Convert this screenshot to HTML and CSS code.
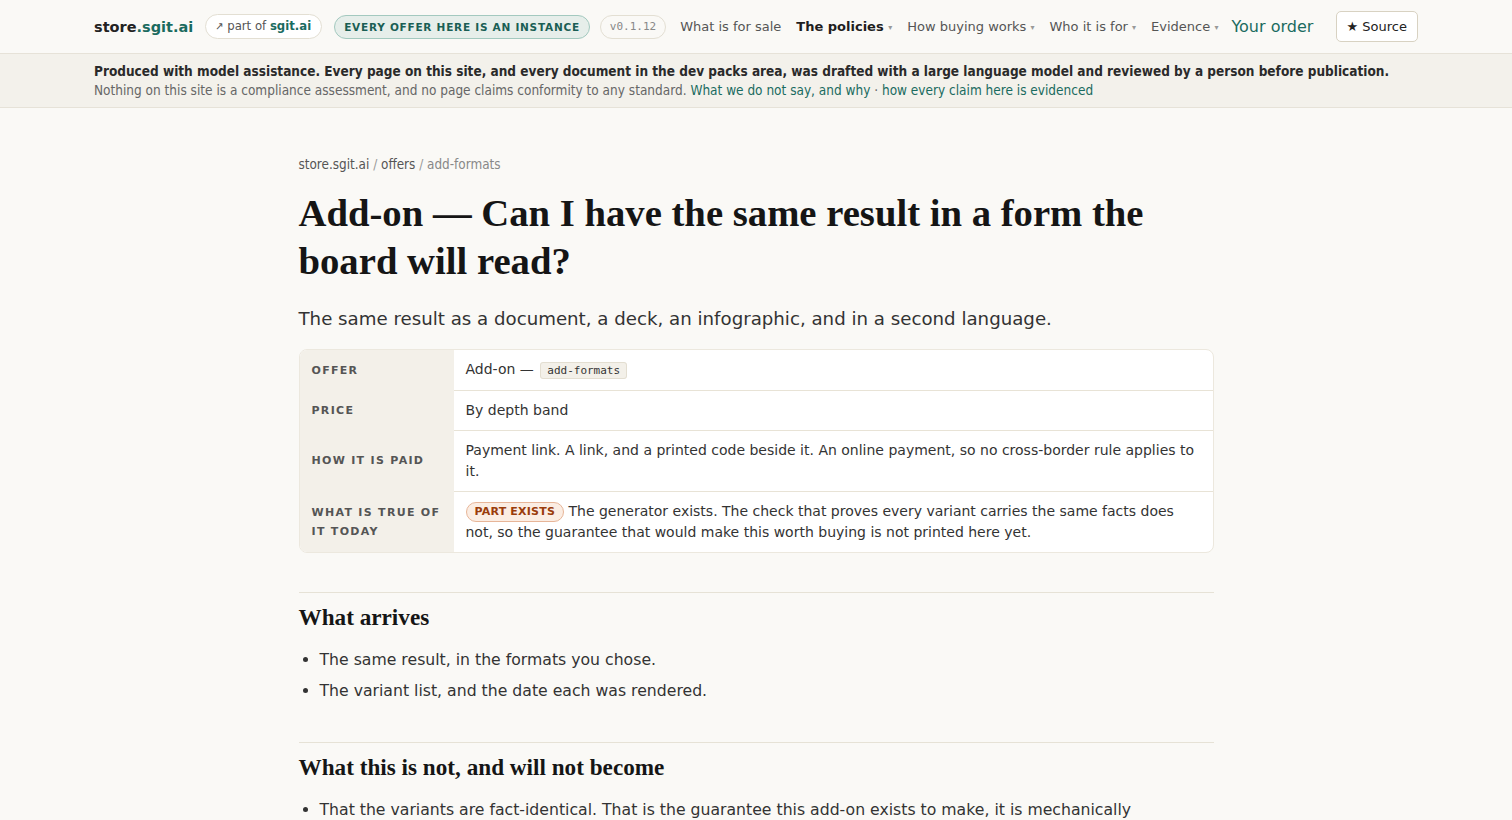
FILE: index.html
```html
<!DOCTYPE html>
<html lang="en">
<head>
<meta charset="utf-8">
<title>Add-on — Can I have the same result in a form the board will read?</title>
<link rel="stylesheet" href="styles.css">
</head>
<body>
<header class="site-header">
  <div class="header-inner">
    <a class="logo" href="#">store<span class="logo-accent">.sgit.ai</span></a>
    <a class="part-of" href="#"><span class="arrow">↗</span> part of <b>sgit.ai</b></a>
    <span class="instance-badge">EVERY OFFER HERE IS AN INSTANCE</span>
    <span class="version">v0.1.12</span>
    <nav class="nav">
      <a class="nav-item" href="#">What is for sale</a>
      <a class="nav-item active" href="#">The policies <span class="caret">▾</span></a>
      <a class="nav-item" href="#">How buying works <span class="caret">▾</span></a>
      <a class="nav-item" href="#">Who it is for <span class="caret">▾</span></a>
      <a class="nav-item" href="#">Evidence <span class="caret">▾</span></a>
      <a class="nav-order" href="#">Your order</a>
    </nav>
    <a class="source-btn" href="#">★ Source</a>
  </div>
</header>
<div class="notice">
  <div class="notice-inner">
    <p class="notice-strong">Produced with model assistance. Every page on this site, and every document in the dev packs area, was drafted with a large language model and reviewed by a person before publication.</p>
    <p class="notice-sub">Nothing on this site is a compliance assessment, and no page claims conformity to any standard. <a href="#">What we do not say, and why</a> · <a href="#">how every claim here is evidenced</a></p>
  </div>
</div>
<main class="page">
  <div class="crumbs"><a href="#">store.sgit.ai</a> <span class="sep">/</span> <a href="#">offers</a> <span class="sep">/</span> <span class="current">add-formats</span></div>
  <h1 class="title">Add-on — Can I have the same result in a form the board will read?</h1>
  <p class="lede">The same result as a document, a deck, an infographic, and in a second language.</p>
  <div class="facts">
    <div class="fact-row">
      <div class="fact-label">OFFER</div>
      <div class="fact-value">Add-on — <code class="chip">add-formats</code></div>
    </div>
    <div class="fact-row">
      <div class="fact-label">PRICE</div>
      <div class="fact-value">By depth band</div>
    </div>
    <div class="fact-row">
      <div class="fact-label">HOW IT IS PAID</div>
      <div class="fact-value">Payment link. A link, and a printed code beside it. An online payment, so no cross-border rule applies to it.</div>
    </div>
    <div class="fact-row">
      <div class="fact-label">WHAT IS TRUE OF IT TODAY</div>
      <div class="fact-value"><span class="status">PART EXISTS</span> The generator exists. The check that proves every variant carries the same facts does not, so the guarantee that would make this worth buying is not printed here yet.</div>
    </div>
  </div>
  <section class="section">
    <h2>What arrives</h2>
    <ul>
      <li>The same result, in the formats you chose.</li>
      <li>The variant list, and the date each was rendered.</li>
    </ul>
  </section>
  <section class="section">
    <h2>What this is not, and will not become</h2>
    <ul>
      <li>That the variants are fact-identical. That is the guarantee this add-on exists to make, it is mechanically checked before it is printed, and it is not printed yet.</li>
    </ul>
  </section>
</main>
</body>
</html>
```

FILE: styles.css
```css
* { box-sizing: border-box; }
html, body { margin: 0; padding: 0; }
body {
  background: #faf9f6;
  color: #2b2b2b;
  font-family: "DejaVu Sans", sans-serif;
}
a { color: inherit; text-decoration: none; }

.site-header {
  height: 54px;
  border-bottom: 1px solid #e6e2d8;
  background: #faf9f6;
}
.header-inner {
  max-width: 1324px;
  margin: 0 auto;
  height: 100%;
  display: flex;
  align-items: center;
  white-space: nowrap;
}
.header-inner > * { flex-shrink: 0; }
.logo {
  font-weight: bold;
  font-size: 14.5px;
  color: #222;
  margin-right: 12px;
}
.logo-accent { color: #1a6b5f; }
.part-of {
  font-family: "DejaVu Sans Condensed", "DejaVu Sans", sans-serif;
  font-stretch: condensed;
  font-size: 13px;
  line-height: 16px;
  color: #555;
  background: #fff;
  border: 1px solid #e3dfd3;
  border-radius: 999px;
  padding: 3px 10px 3px 9px;
  margin-right: 12px;
}
.part-of .arrow { font-size: 11px; color: #555; }
.part-of b { color: #1a6b5f; }
.instance-badge {
  font-size: 10.5px;
  line-height: 14px;
  font-weight: bold;
  letter-spacing: 0.75px;
  color: #1a5e54;
  background: #e6eeea;
  border: 1px solid #a3c9bf;
  border-radius: 999px;
  padding: 4px 9px 4px 9px;
  margin-right: 10px;
}
.version {
  font-family: "DejaVu Sans Mono", monospace;
  font-size: 11px;
  line-height: 14px;
  color: #888;
  border: 1px solid #e3dfd3;
  border-radius: 999px;
  padding: 4px 9px;
  margin-right: 14px;
}
.nav {
  display: flex;
  align-items: center;
  gap: 15px;
}
.nav-item {
  font-size: 13px;
  color: #555;
}
.nav-item.active { color: #1e1e1e; font-weight: bold; }
.caret { font-size: 8px; color: #999; vertical-align: 1px; }
.nav-order {
  font-size: 16px;
  color: #1a6b5f;
  margin-left: -2px;
}
.source-btn {
  margin-left: auto;
  font-size: 13px;
  line-height: 17px;
  color: #222;
  background: #fff;
  border: 1px solid #d8d2c2;
  border-radius: 5px;
  padding: 6px 10px;
}

.notice {
  background: #f3f1eb;
  border-bottom: 1px solid #e6e2d8;
}
.notice-inner {
  max-width: 1324px;
  margin: 0 auto;
  padding: 9px 0 8px;
  font-family: "DejaVu Sans Condensed", "DejaVu Sans", sans-serif;
  font-stretch: condensed;
}
.notice p { margin: 0; }
.notice-strong {
  font-weight: bold;
  font-size: 13.5px;
  line-height: 16px;
  color: #2a2a2a;
}
.notice .notice-sub {
  font-size: 13.5px;
  line-height: 18px;
  color: #666;
  margin-top: 2px;
}
.notice-sub a { color: #1a6b5f; }

.page {
  max-width: 915px;
  margin: 0 auto;
  padding-top: 49px;
  padding-bottom: 40px;
}
.crumbs {
  font-family: "DejaVu Sans Condensed", "DejaVu Sans", sans-serif;
  font-stretch: condensed;
  font-size: 13.4px;
  color: #555;
}
.crumbs .sep { color: #999; }
.crumbs .current { color: #888; }
.title {
  font-family: "Liberation Serif", "Times New Roman", serif;
  font-weight: bold;
  font-size: 38.7px;
  line-height: 48px;
  color: #151515;
  margin: 17px 0 0;
}
.lede {
  font-size: 18.2px;
  color: #333;
  margin: 20px 0 0;
  line-height: 28px;
}
.facts {
  margin-top: 16px;
  border: 1px solid #ece8de;
  border-radius: 8px;
  background: #fff;
  overflow: hidden;
}
.fact-row {
  display: grid;
  grid-template-columns: 154px 1fr;
}
.fact-row + .fact-row .fact-value { border-top: 1px solid #e8e3d6; }
.fact-label {
  background: #f3f0e9;
  font-size: 11px;
  font-weight: bold;
  letter-spacing: 1.3px;
  color: #555;
  padding: 0 12px;
  display: flex;
  align-items: center;
  line-height: 19px;
}
.fact-value {
  font-size: 14px;
  line-height: 21px;
  color: #333;
  padding: 9px 15px 9px 12px;
}
.chip {
  font-family: "DejaVu Sans Mono", monospace;
  font-size: 11px;
  background: #f3f0e9;
  border: 1px solid #e3ded1;
  border-radius: 3px;
  padding: 1px 6px;
  color: #333;
  margin-left: 2px;
}
.status {
  display: inline-block;
  font-size: 11px;
  font-weight: bold;
  letter-spacing: 0.2px;
  color: #9a3c0b;
  background: #fbede3;
  border: 1px solid #e7b598;
  border-radius: 999px;
  padding: 0 8px;
  line-height: 18px;
  vertical-align: 1px;
}

.section {
  margin-top: 39px;
  border-top: 1px solid #e6e2d6;
}
.section h2 {
  font-family: "Liberation Serif", "Times New Roman", serif;
  font-weight: bold;
  font-size: 23.2px;
  line-height: 28px;
  color: #151515;
  margin: 10px 0 0;
}
.section ul {
  margin: 18px 0 0;
  padding-left: 21px;
  max-width: 840px;
  font-size: 15.7px;
  color: #333;
  line-height: 22px;
}
.section li { margin-bottom: 9px; }
.section + .section { margin-top: 40px; }
```
